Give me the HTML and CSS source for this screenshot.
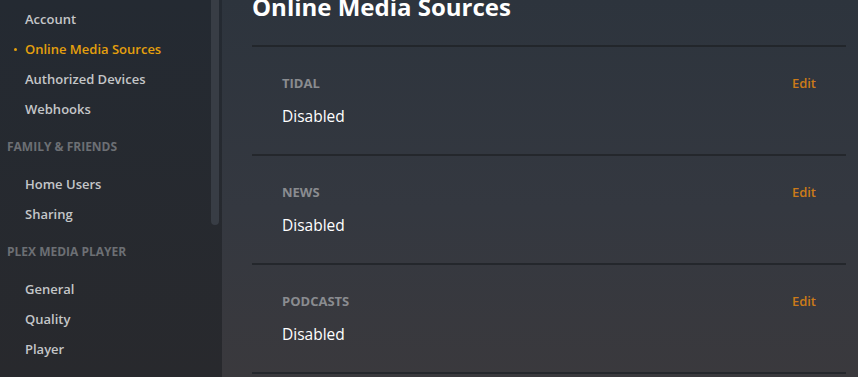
FILE: index.html
```html
<!DOCTYPE html>
<html lang="en">
<head>
    <meta charset="UTF-8">
    <title>Settings - Online Media Sources</title>
    <link rel="stylesheet" href="styles.css">
</head>
<body>
    <div class="layout">
        <aside class="sidebar">
            <nav class="side-nav">
                <a class="nav-item">Account</a>
                <a class="nav-item active">Online Media Sources</a>
                <a class="nav-item">Authorized Devices</a>
                <a class="nav-item">Webhooks</a>

                <div class="nav-header">Family &amp; Friends</div>
                <a class="nav-item">Home Users</a>
                <a class="nav-item">Sharing</a>

                <div class="nav-header">Plex Media Player</div>
                <a class="nav-item">General</a>
                <a class="nav-item">Quality</a>
                <a class="nav-item">Player</a>
            </nav>
            <div class="scroll-track">
                <div class="scroll-thumb"></div>
            </div>
        </aside>

        <main class="content">
            <h1 class="page-title">Online Media Sources</h1>

            <section class="source">
                <div class="source-head">
                    <span class="source-name">Tidal</span>
                    <a class="edit-link">Edit</a>
                </div>
                <div class="source-status">Disabled</div>
            </section>

            <section class="source">
                <div class="source-head">
                    <span class="source-name">News</span>
                    <a class="edit-link">Edit</a>
                </div>
                <div class="source-status">Disabled</div>
            </section>

            <section class="source">
                <div class="source-head">
                    <span class="source-name">Podcasts</span>
                    <a class="edit-link">Edit</a>
                </div>
                <div class="source-status">Disabled</div>
            </section>
        </main>
    </div>
</body>
</html>
```

FILE: styles.css
```css
html, body {
    margin: 0;
    height: 100%;
    overflow: hidden;
}

body {
    font-family: "Open Sans", "Noto Sans", sans-serif;
    background-color: #33373d;
    color: #fff;
}

.layout {
    display: flex;
    height: 377px;
}

/* sidebar */

.sidebar {
    width: 222px;
    flex-shrink: 0;
    display: flex;
    background: linear-gradient(to bottom, #242a32 0%, #28292d 100%);
}

.side-nav {
    flex: 1;
    display: flex;
    flex-direction: column;
    padding-top: 4px;
}

.nav-item {
    position: relative;
    display: block;
    height: 30px;
    line-height: 30px;
    padding-left: 25px;
    font-size: 13px;
    font-weight: 600;
    color: #c4c6c8;
    white-space: nowrap;
}

.nav-item.active {
    color: #e5a00d;
}

.nav-item.active::before {
    content: "";
    position: absolute;
    left: 14px;
    top: 14px;
    width: 3px;
    height: 3px;
    border-radius: 50%;
    background-color: #e5a00d;
}

.nav-header {
    margin: 15px 0 14px;
    padding-left: 7px;
    height: 16px;
    line-height: 16px;
    font-size: 12px;
    font-weight: 700;
    text-transform: uppercase;
    color: #6c6f74;
    white-space: nowrap;
}

.scroll-track {
    width: 11px;
    flex-shrink: 0;
}

.scroll-thumb {
    width: 8px;
    height: 225px;
    border-radius: 0 0 4px 4px;
    background-color: #383d45;
}

/* main */

.content {
    flex: 1;
    padding: 0 12px 0 30px;
    background: linear-gradient(to bottom, #2d343d 0%, #343840 55%, #3a393d 100%);
}

.page-title {
    margin: -8px 0 0;
    height: 55px;
    line-height: 30px;
    font-size: 24px;
    font-weight: 700;
    border-bottom: 2px solid #22262b;
    box-sizing: border-box;
}

.source {
    height: 109px;
    box-sizing: border-box;
    padding: 28px 30px 0;
    border-bottom: 2px solid #24272c;
}

.source-head {
    display: flex;
    justify-content: space-between;
    align-items: center;
    height: 16px;
    margin-bottom: 15px;
}

.source-name {
    font-size: 13px;
    font-weight: 700;
    text-transform: uppercase;
    color: #8a8c90;
}

.edit-link {
    font-size: 13px;
    font-weight: 600;
    color: #cc7b19;
    cursor: pointer;
}

.source-status {
    height: 20px;
    line-height: 20px;
    font-size: 15.5px;
}
```
